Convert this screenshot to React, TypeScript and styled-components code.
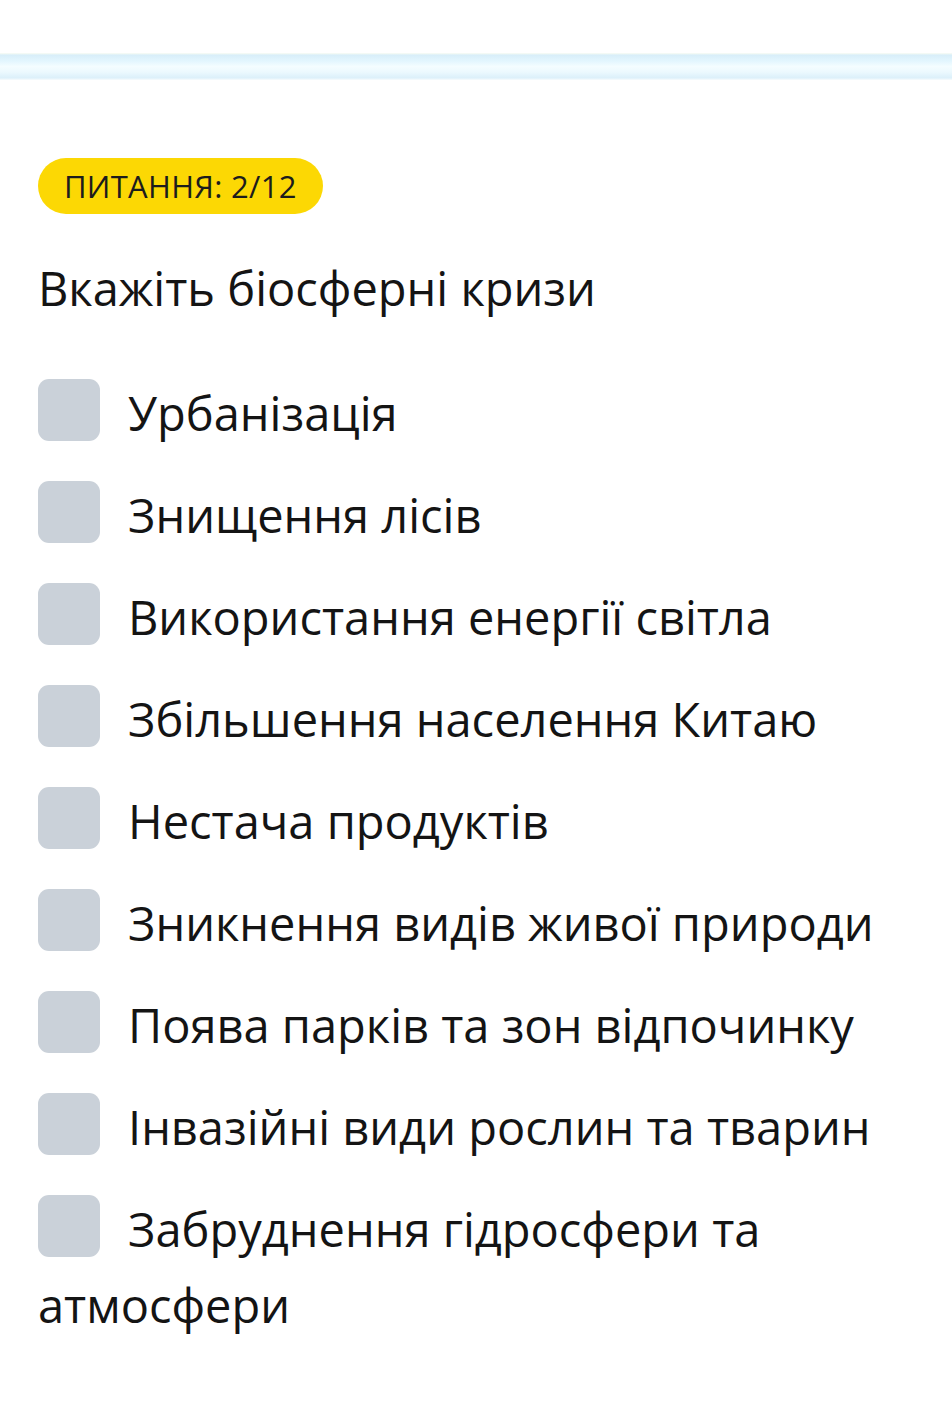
import React from "react";
import styled, { createGlobalStyle } from "styled-components";

const Global = createGlobalStyle`
  html, body { margin: 0; padding: 0; background: #ffffff; }
  body { font-family: "Open Sans", "Noto Sans", sans-serif; color: #141414; }
`;

const Page = styled.div`
  width: 952px;
  min-height: 1413px;
  background: #fff;
  padding-top: 53px;
  box-sizing: border-box;
`;

const Stripe = styled.div`
  height: 27px;
  background: linear-gradient(
    to bottom,
    #fbfdf4 0%,
    #d8eef9 8%,
    #e3f6fe 30%,
    #f4fdff 50%,
    #ecf9fe 70%,
    #dcf0fa 92%,
    #f8fcfd 100%
  );
`;

const Content = styled.div`
  padding: 78px 38px 0 38px;
`;

const Badge = styled.div`
  display: inline-flex;
  align-items: center;
  height: 56px;
  padding: 0 26px;
  border-radius: 28px;
  background: #fcd804;
  font-size: 31px;
  letter-spacing: 0.3px;
  color: #1c1c1c;
`;

const Question = styled.h1`
  margin: 36px 0 0 0;
  font-size: 47px;
  font-weight: 400;
  line-height: 76px;
  color: #141414;
`;

const Options = styled.div`
  margin-top: 49px;
`;

const Option = styled.label`
  display: block;
  font-size: 47px;
  line-height: 76px;
  margin-bottom: 26px;
  color: #141414;
  cursor: pointer;
`;

const Box = styled.span`
  display: inline-block;
  vertical-align: top;
  width: 62px;
  height: 62px;
  margin-top: 4px;
  margin-right: 28px;
  border-radius: 11px;
  background: #cad1d9;
`;

const options = [
  "Урбанізація",
  "Знищення лісів",
  "Використання енергії світла",
  "Збільшення населення Китаю",
  "Нестача продуктів",
  "Зникнення видів живої природи",
  "Поява парків та зон відпочинку",
  "Інвазійні види рослин та тварин",
  "Забруднення гідросфери та атмосфери",
];

export default function App() {
  return (
    <>
      <Global />
      <Page>
        <Stripe />
        <Content>
          <Badge>ПИТАННЯ: 2/12</Badge>
          <Question>Вкажіть біосферні кризи</Question>
          <Options>
            {options.map((o) => (
              <Option key={o}>
                <Box />
                {o}
              </Option>
            ))}
          </Options>
        </Content>
      </Page>
    </>
  );
}
